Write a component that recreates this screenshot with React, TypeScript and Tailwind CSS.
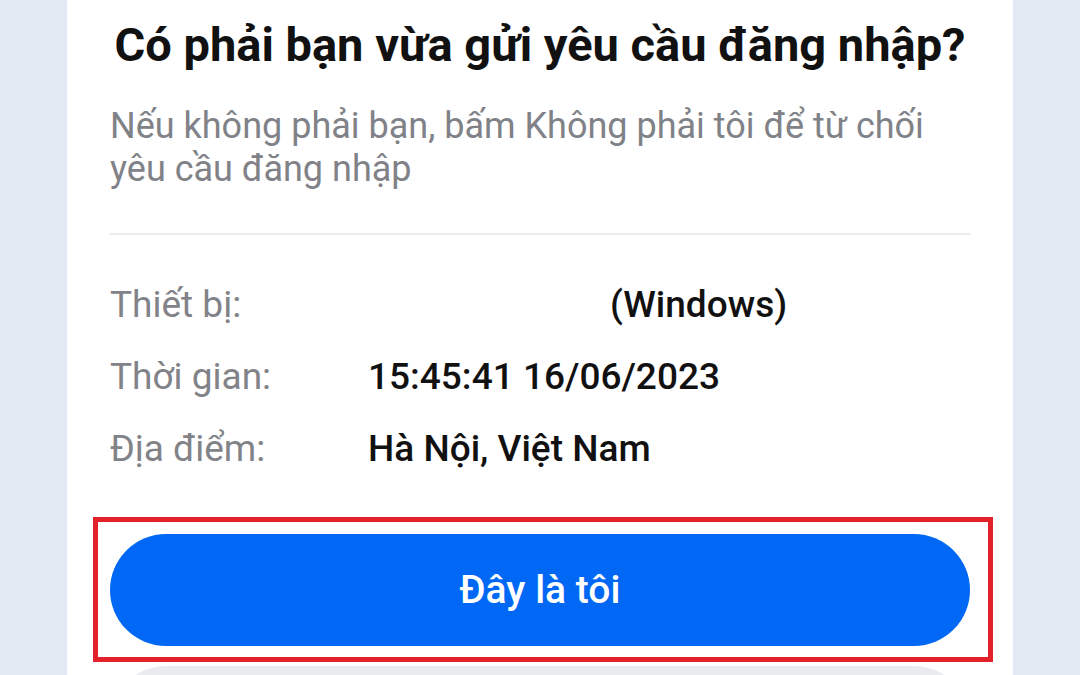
import React from "react";

const rows = [
  { label: "Thiết bị:", value: "(Windows)", indent: true },
  { label: "Thời gian:", value: "15:45:41 16/06/2023" },
  { label: "Địa điểm:", value: "Hà Nội, Việt Nam" },
];

export default function App() {
  return (
    <div
      className="w-[1080px] h-[675px] overflow-hidden bg-[#e3e9f2]"
      style={{ fontFamily: "Roboto, 'Noto Sans', sans-serif" }}
    >
      <div className="ml-[67px] w-[946px] h-full bg-white px-[43px]">
        <h1 className="pt-[18px] text-center text-[47px] leading-[54px] font-bold text-[#111111] whitespace-nowrap">
          Có phải bạn vừa gửi yêu cầu đăng nhập?
        </h1>
        <p className="mt-[33px] text-[36px] leading-[43px] text-[#808287]">
          Nếu không phải bạn, bấm Không phải tôi để từ chối yêu cầu đăng nhập
        </p>
        <div className="mt-[42px] h-[2px] bg-[#ececee]" />

        <div className="mt-[34px]">
          {rows.map((r) => (
            <div key={r.label} className="flex h-[72px] items-center text-[37px]">
              <span className="w-[258px] shrink-0 text-[#818388]">{r.label}</span>
              <span className={`font-medium text-[#111111] ${r.indent ? "pl-[242px]" : ""}`}>
                {r.value}
              </span>
            </div>
          ))}
        </div>

        <div className="relative mt-[49px]">
          <button className="flex h-[112px] w-full items-center justify-center rounded-full bg-[#0068f5] text-[39px] font-medium text-white">
            Đây là tôi
          </button>
          <span className="pointer-events-none absolute -top-[17px] -left-[17px] -right-[23px] -bottom-[16px] border-[5px] border-[#e3212b]" />
        </div>

        <button className="mt-[20px] h-[112px] w-full rounded-full bg-[#e9ebef]" />
      </div>
    </div>
  );
}
